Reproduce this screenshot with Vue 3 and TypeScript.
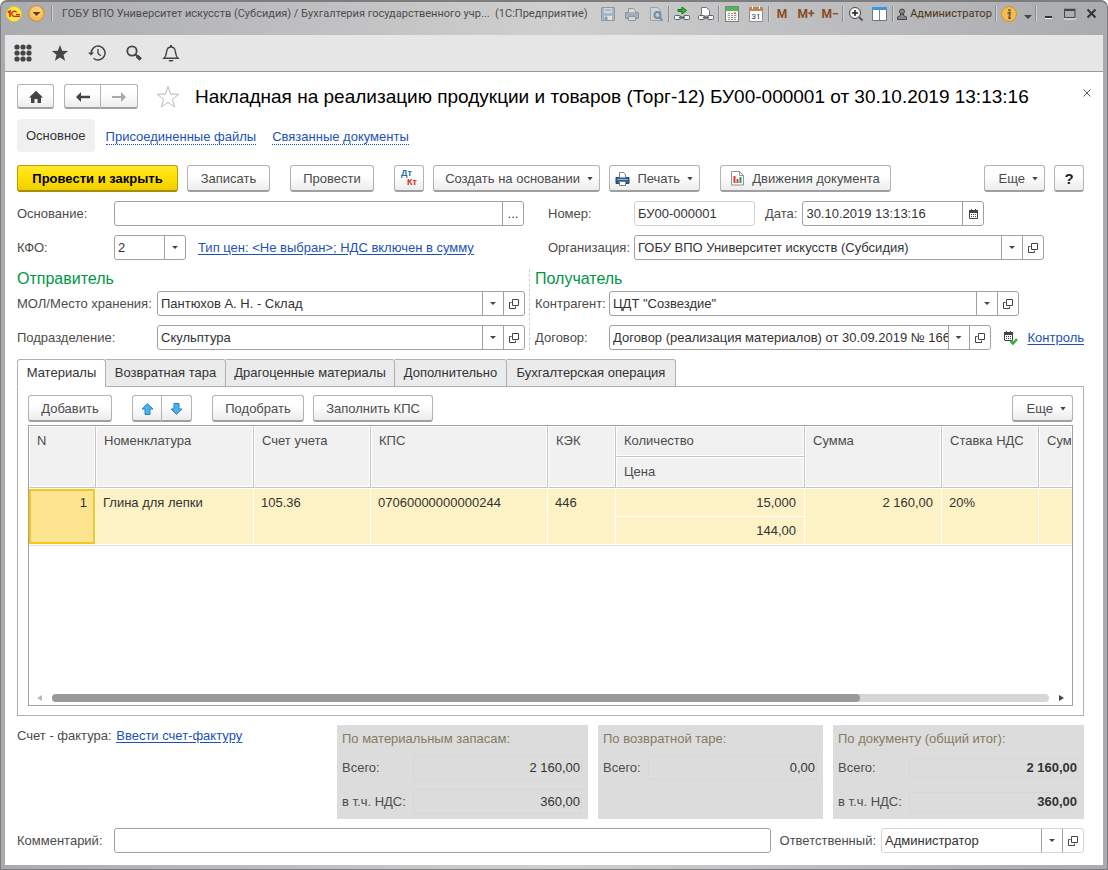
<script setup lang="ts">
import { ref } from 'vue'

interface Column {
  title: string
  cls: string
}

const formTabs = ['Материалы', 'Возвратная тара', 'Драгоценные материалы', 'Дополнительно', 'Бухгалтерская операция']
const activeTab = ref(0)

const leadColumns: Column[] = [
  { title: 'N', cls: 'c-n' },
  { title: 'Номенклатура', cls: 'c-item' },
  { title: 'Счет учета', cls: 'c-account' },
  { title: 'КПС', cls: 'c-kps' },
  { title: 'КЭК', cls: 'c-kek' },
]
const tailColumns: Column[] = [
  { title: 'Сумма', cls: 'c-sum' },
  { title: 'Ставка НДС', cls: 'c-rate' },
  { title: 'Сум', cls: 'c-rest' },
]

const basis = ref('')
const kfo = ref('2')
const docNumber = ref('БУ00-000001')
const docDate = ref('30.10.2019 13:13:16')
const organization = ref('ГОБУ ВПО Университет искусств (Субсидия)')
const storage = ref('Пантюхов А. Н. - Склад')
const department = ref('Скульптура')
const contractor = ref('ЦДТ "Созвездие"')
const contract = ref('Договор (реализация материалов) от 30.09.2019 № 166')
const comment = ref('')
const responsible = ref('Администратор')
</script>

<template>
  <div class="window">
    <header class="titlebar">
      <svg class="logo" width="16" height="16" viewBox="0 0 16 16" aria-hidden="true">
        <circle cx="8" cy="8" r="7.5" fill="#ffe84a" stroke="#e9c61c" />
        <path d="M1.800 6.500L4 5v6" fill="none" stroke="#d8231d" stroke-width="1.600" />
        <path d="M10.500 6.300A2.600 2.600 0 1 0 8.400 10.400H14M10 8.600H14" fill="none" stroke="#d8231d" stroke-width="1.300" />
      </svg>
      <button class="round" type="button" aria-label="Меню">
        <svg width="17" height="17" viewBox="0 0 17 17"><circle cx="8.500" cy="8.500" r="7.800" fill="#f8bb58" stroke="#c48a33" /><circle cx="8.500" cy="6.500" r="5.500" fill="#ffd58a" opacity=".6" /><path d="M4.500 7h8l-4 4z" fill="#6b3a10" /></svg>
      </button>
      <i class="sep"></i>
      <span class="caption">ГОБУ ВПО Университет искусств (Субсидия) / Бухгалтерия государственного учр...&nbsp; (1С:Предприятие)</span>
      <div class="sys">
        <button type="button" aria-label="Сохранить"><svg width="16" height="16" viewBox="0 0 16 16"><path d="M1.500 1.500h13v13h-13z" fill="#a9b6bf" stroke="#8b9aa5" /><path d="M4 2h8v5H4z" fill="#d3d8db" /><path d="M4 10h8v4H4z" fill="#dfe3e5" /><path d="M5 4h6M5 11h2v3H5z" stroke="#8b9aa5" fill="#8b9aa5" /></svg></button>
        <button type="button" aria-label="Печать"><svg width="16" height="16" viewBox="0 0 16 16"><path d="M1.500 6.500h13v6h-13z" fill="#a3afb8" stroke="#8b97a0" /><path d="M4.500 6.500v-4h5l2 2v2M4.500 10.500h7v4h-7z" fill="#d3d8db" stroke="#8b97a0" /></svg></button>
        <button type="button" aria-label="Предварительный просмотр"><svg width="16" height="16" viewBox="0 0 16 16"><path d="M2.500 1.500h7l3 3v10h-10z" fill="#ccd2d6" stroke="#98a4ad" /><circle cx="9.500" cy="9" r="3" fill="#c5ced4" stroke="#778b99" stroke-width="2" /><path d="M11.500 11.500l3 3" stroke="#778b99" stroke-width="2" /></svg></button>
        <i class="sep"></i>
        <button type="button" aria-label="Получить ссылку"><svg width="18" height="16" viewBox="0 0 18 16"><g fill="#f2f4f6" stroke="#59636d"><rect x="1.500" y="9.500" width="6" height="4" rx="1" /><rect x="10.500" y="9.500" width="6" height="4" rx="1" /></g><path d="M6 11.500h6" stroke="#59636d" stroke-width="2" /><path d="M5 3.500h4V1l4.500 3.500L9 8V5.500H5z" fill="#22c322" stroke="#16701a" /></svg></button>
        <button type="button" aria-label="Перейти по ссылке"><svg width="18" height="16" viewBox="0 0 18 16"><path d="M4.500 9V1.500h5l3 3V9" fill="#fff" stroke="#6d7780" /><g fill="#f2f4f6" stroke="#59636d"><rect x="1.500" y="9.500" width="6" height="4" rx="1" /><rect x="10.500" y="9.500" width="6" height="4" rx="1" /></g><path d="M6 11.500h6" stroke="#59636d" stroke-width="2" /></svg></button>
        <i class="sep"></i>
        <button type="button" aria-label="Калькулятор"><svg width="14" height="16" viewBox="0 0 14 16"><path d="M.5.500h13v15H.5z" fill="#f5f3ef" stroke="#7d7d72" /><path d="M1 1h12v4H1z" fill="#4cbb5c" /><path d="M3 7.500h8M3 9.500h8M3 11.500h8M3 13.500h8" stroke="#999" stroke-dasharray="2 1" /><path d="M9 6.500h2v1.500H9z" fill="#e0503f" /></svg></button>
        <button type="button" aria-label="Календарь"><svg width="14" height="16" viewBox="0 0 14 16"><path d="M.5 1.500h13v14H.5z" fill="#fbfcfd" stroke="#8d8f94" /><path d="M0 1h14v4H0z" fill="#c08254" /><path d="M3.500 0v3M10.500 0v3" stroke="#fff" /><text x="7" y="13" text-anchor="middle" font-size="8" fill="#333">31</text></svg></button>
        <i class="sep"></i>
        <button class="mem" type="button">M</button>
        <button class="mem" type="button">M+</button>
        <button class="mem" type="button">M−</button>
        <i class="sep"></i>
        <button type="button" aria-label="Масштаб"><svg width="16" height="16" viewBox="0 0 16 16"><circle cx="7" cy="7" r="5.500" fill="#f4f4f4" stroke="#444" /><path d="M7 4v6M4 7h6" stroke="#222" stroke-width="1.500" /><path d="M11 11l3.500 3.500" stroke="#555" stroke-width="2" /></svg></button>
        <button type="button" aria-label="Панели"><svg width="16" height="16" viewBox="0 0 16 16"><path d="M.5 1.500h14v13H.5z" fill="#fff" stroke="#657684" /><path d="M0 1h15v3H0z" fill="#3d94e0" /><path d="M7.500 4v10" stroke="#7b8893" /></svg></button>
        <i class="sep"></i>
        <button class="user" type="button"><svg width="10" height="12" viewBox="0 0 10 12"><circle cx="5" cy="3.500" r="2.500" fill="#888" stroke="#444" /><path d="M3.500 6h3v1.500l3 1.500v2.500h-9V9l3-1.500z" fill="#888" stroke="#444" /></svg><span>Администратор</span></button>
        <i class="sep"></i>
        <button class="info" type="button" aria-label="О программе"><svg width="16" height="16" viewBox="0 0 16 16"><circle cx="8" cy="8" r="7.500" fill="#f6bd4d" stroke="#d3922b" /><circle cx="8.500" cy="4.200" r="1.300" fill="#6e5f50" /><path d="M6.500 7h2.500L8 12h2" fill="none" stroke="#6e5f50" stroke-width="1.800" /></svg></button>
        <button class="narrow" type="button" aria-label="Список"><svg width="8" height="5" viewBox="0 0 8 5"><path d="M0 0h8L4 4z" fill="#444" /></svg></button>
        <i class="sep"></i>
        <button type="button" aria-label="Свернуть"><svg width="12" height="12" viewBox="0 0 12 12"><path d="M3 9h7" stroke="#333" stroke-width="2" /><path d="M3 10.500h7" stroke="#eee" /></svg></button>
        <button type="button" aria-label="Развернуть"><svg width="12" height="12" viewBox="0 0 12 12"><path d="M.5 2.500h10.500v7H.5z" fill="none" stroke="#444" /><path d="M0 1.500h11.500" stroke="#444" stroke-width="1.500" /><path d="M0 11h12" stroke="#eee" /></svg></button>
        <button type="button" aria-label="Закрыть окно"><svg width="12" height="12" viewBox="0 0 12 12"><path d="M1.500 1.500l8 8M9.500 1.500l-8 8" stroke="#333" stroke-width="2" /></svg></button>
      </div>
    </header>

    <nav class="tools" aria-label="Инструменты">
      <button type="button" aria-label="Функции"><svg width="18" height="18" viewBox="0 0 18 18" fill="#444"><template v-for="r in 3" :key="r"><circle v-for="c in 3" :key="c" :cx="c * 6 - 3" :cy="r * 6 - 3" r="2.600" /></template></svg></button>
      <button type="button" aria-label="Избранное"><svg width="18" height="18" viewBox="0 0 18 18"><path d="M9 1l2.200 5.700 5.900.3-4.600 3.700 1.600 6L9 13.400l-5.100 3.300 1.600-6L.9 7l5.900-.3z" fill="#444" /></svg></button>
      <button type="button" aria-label="История"><svg width="18" height="18" viewBox="0 0 18 18" fill="none" stroke="#444" stroke-width="1.500"><path d="M3.200 9a6.900 6.900 0 1 1 2.400 5.200" /><path d="M10 5v4.500l2.800 2.200" stroke-width="1.300" /><path d="M0 8.500h6L3 11.500z" fill="#444" stroke="none" /></svg></button>
      <button type="button" aria-label="Поиск"><svg width="18" height="18" viewBox="0 0 18 18" fill="none" stroke="#444"><circle cx="7" cy="7" r="4.700" stroke-width="1.800" /><path d="M10.500 10.500l2 2" stroke-width="1.800" /><path d="M12 12l3.700 3.500" stroke-width="3.400" /></svg></button>
      <button type="button" aria-label="Оповещения"><svg width="18" height="18" viewBox="0 0 18 18"><path d="M2 14.200c2.500-2 2.200-5 2.800-7.500C5.300 4.300 6.800 3 9 3s3.700 1.300 4.200 3.700c.6 2.500.3 5.500 2.800 7.500z" fill="none" stroke="#444" stroke-width="1.400" /><path d="M9 1v2" stroke="#444" stroke-width="2" /><path d="M6.500 16h5l-1 1.500h-3z" fill="#444" /></svg></button>
    </nav>

    <main class="page">
      <div class="heading">
        <button class="btn low home" type="button" aria-label="Домой"><svg width="16" height="14" viewBox="0 0 16 14"><path d="M8 .8L15 7.500h-2V13H9.500V9h-3v4H3V7.500H1z" fill="#444" /></svg></button>
        <div class="pair">
          <button class="btn low" type="button" aria-label="Назад"><svg width="14" height="10" viewBox="0 0 14 10"><path d="M5 0v3.700h9v2.600H5V10L0 5z" fill="#444" /></svg></button>
          <button class="btn low" type="button" aria-label="Вперед"><svg width="14" height="10" viewBox="0 0 14 10"><path d="M9 0v4H0v2h9v4l5-5z" fill="#aaa" /></svg></button>
        </div>
        <button class="plain fav" type="button" aria-label="В избранное"><svg width="24" height="24" viewBox="0 0 24 24"><path d="M12 1.500l2.700 7.600 8.100.2-6.400 5 2.300 7.700L12 17.400 5.300 22l2.300-7.700-6.400-5 8.100-.2z" fill="#fff" stroke="#b4bac2" /></svg></button>
        <h1>Накладная на реализацию продукции и товаров (Торг-12) БУ00-000001 от 30.10.2019 13:13:16</h1>
        <button class="plain close" type="button" aria-label="Закрыть"><svg width="8" height="8" viewBox="0 0 8 8"><path d="M.5.500l7 7M7.500.500l-7 7" stroke="#555" /></svg></button>
      </div>

      <nav class="links" aria-label="Разделы документа">
        <a class="current" href="#main">Основное</a>
        <a href="#files">Присоединенные файлы</a>
        <a href="#related">Связанные документы</a>
      </nav>

      <div class="commands">
        <button class="btn primary w-161" type="button">Провести и закрыть</button>
        <button class="btn w-83" type="button">Записать</button>
        <button class="btn w-84 apart" type="button">Провести</button>
        <button class="btn w-30 apart dtkt" type="button"><span class="dt">Дт</span><span class="kt">Кт</span></button>
        <button class="btn w-167 menu" type="button">Создать на основании<i class="caret"></i></button>
        <button class="btn w-91 menu" type="button"><svg width="15" height="14" viewBox="0 0 15 14"><path d="M1 5.500h13v6H1z" fill="#2f5f8c" stroke="#27496b" /><path d="M4.500 5.500v-5h4l2 2v3" fill="#fff" stroke="#6d8296" /><path d="M4.500 9.500h6v4h-6z" fill="#fff" stroke="#6d8296" /><path d="M2 7.500h11" stroke="#8db3d2" /></svg>Печать<i class="caret"></i></button>
        <button class="btn w-171 apart moves" type="button"><svg width="13" height="15" viewBox="0 0 13 15"><path d="M.5.500h8l4 4v9.500H.5z" fill="#fff" stroke="#8494a3" /><path d="M8.500.500v4h4" fill="none" stroke="#8494a3" /><path d="M3.500 5v7" stroke="#d33" stroke-width="2" /><path d="M6.500 8v4" stroke="#d33" stroke-width="2" /><path d="M9.500 6v6" stroke="#2a9a3c" stroke-width="2" /></svg>Движения документа</button>
        <span class="grow"></span>
        <button class="btn w-61 menu" type="button">Еще<i class="caret"></i></button>
        <button class="btn w-30 help" type="button">?</button>
      </div>

      <div class="upper">
        <div class="row">
          <label class="l-97" for="basis">Основание:</label>
          <div class="field grow"><input id="basis" v-model="basis" type="text"><button type="button" aria-label="Выбрать">...</button></div>
        </div>
        <div class="row">
          <label class="l-86" for="number">Номер:</label>
          <div class="field pale number"><input id="number" v-model="docNumber" type="text"></div>
          <label class="date-label" for="date">Дата:</label>
          <div class="field date"><input id="date" v-model="docDate" type="text"><button type="button" aria-label="Календарь"><svg width="9" height="10" viewBox="0 0 9 10"><path d="M.5 1.500h8v8h-8z" fill="#fff" stroke="#444" /><path d="M0 1h9v3H0zM2 0h1v2H2zM6 0h1v2H6z" fill="#444" /><path d="M2 5.500h5M2 7.500h5" stroke="#444" stroke-dasharray="1 1" /></svg></button></div>
        </div>
        <div class="row">
          <label class="l-97" for="kfo">КФО:</label>
          <div class="field kfo"><select id="kfo" v-model="kfo"><option>2</option></select><button type="button" aria-label="Список КФО"><i class="caret"></i></button></div>
          <a class="link price" href="#price">Тип цен: &lt;Не выбран&gt;; НДС включен в сумму</a>
        </div>
        <div class="row">
          <label class="l-86" for="org">Организация:</label>
          <div class="field grow"><input id="org" v-model="organization" type="text"><button type="button" aria-label="Список"><i class="caret"></i></button><button type="button" aria-label="Открыть"><svg class="open" width="10" height="10" viewBox="0 0 10 10"><path d="M3.500.500h6v6h-6zM2.500 3.500h-2v6h6v-2" /></svg></button></div>
        </div>
      </div>

      <div class="parties">
        <section class="party">
          <h2>Отправитель</h2>
          <div class="row">
            <label class="l-140" for="storage">МОЛ/Место хранения:</label>
            <div class="field grow"><input id="storage" v-model="storage" type="text"><button type="button" aria-label="Список"><i class="caret"></i></button><button type="button" aria-label="Открыть"><svg class="open" width="10" height="10" viewBox="0 0 10 10"><path d="M3.500.500h6v6h-6zM2.500 3.500h-2v6h6v-2" /></svg></button></div>
          </div>
          <div class="row">
            <label class="l-140" for="department">Подразделение:</label>
            <div class="field grow"><input id="department" v-model="department" type="text"><button type="button" aria-label="Список"><i class="caret"></i></button><button type="button" aria-label="Открыть"><svg class="open" width="10" height="10" viewBox="0 0 10 10"><path d="M3.500.500h6v6h-6zM2.500 3.500h-2v6h6v-2" /></svg></button></div>
          </div>
        </section>
        <section class="party receiver">
          <h2>Получатель</h2>
          <div class="row contractor">
            <label class="l-74" for="contractor">Контрагент:</label>
            <div class="field grow"><input id="contractor" v-model="contractor" type="text"><button type="button" aria-label="Список"><i class="caret"></i></button><button type="button" aria-label="Открыть"><svg class="open" width="10" height="10" viewBox="0 0 10 10"><path d="M3.500.500h6v6h-6zM2.500 3.500h-2v6h6v-2" /></svg></button></div>
          </div>
          <div class="row">
            <label class="l-74" for="contract">Договор:</label>
            <div class="field grow"><input id="contract" v-model="contract" type="text"><button type="button" aria-label="Список"><i class="caret"></i></button><button type="button" aria-label="Открыть"><svg class="open" width="10" height="10" viewBox="0 0 10 10"><path d="M3.500.500h6v6h-6zM2.500 3.500h-2v6h6v-2" /></svg></button></div>
            <svg class="check" width="14" height="14" viewBox="0 0 14 14" aria-hidden="true"><path d="M.5 1.500h8v8h-8z" fill="#fff" stroke="#444" /><path d="M0 1h9v3H0zM2 0h1v2H2zM6 0h1v2H6z" fill="#444" /><path d="M2 5.500h5M2 7.500h5" stroke="#444" stroke-dasharray="1 1" /><path d="M6.500 10l2.500 2.500 4-4.500" fill="none" stroke="#2fae35" stroke-width="2.500" /></svg>
            <a class="link" href="#control">Контроль</a>
          </div>
        </section>
      </div>

      <div class="tabs" role="tablist">
        <button v-for="(tab, i) in formTabs" :key="tab" type="button" role="tab" :aria-selected="i === activeTab" :class="{ on: i === activeTab }" @click="activeTab = i">{{ tab }}</button>
      </div>

      <section class="panel">
        <div class="panel-bar">
          <button class="btn w-84" type="button">Добавить</button>
          <div class="pair small apart">
            <button class="btn" type="button" aria-label="Вверх"><svg width="13" height="12" viewBox="0 0 13 12"><path d="M6.500.700L12 6H9v5.500H4V6H1z" fill="#46b3f1" stroke="#2682bb" /></svg></button>
            <button class="btn" type="button" aria-label="Вниз"><svg width="13" height="12" viewBox="0 0 13 12"><path d="M6.500 11.300L12 6H9V.500H4V6H1z" fill="#46b3f1" stroke="#2682bb" /></svg></button>
          </div>
          <button class="btn w-92 apart" type="button">Подобрать</button>
          <button class="btn w-120" type="button">Заполнить КПС</button>
          <span class="grow"></span>
          <button class="btn w-61 menu" type="button">Еще<i class="caret"></i></button>
        </div>

        <div class="sheet">
          <table>
            <colgroup>
              <col v-for="c in leadColumns" :key="c.cls" :class="c.cls">
              <col class="c-qty">
              <col v-for="c in tailColumns" :key="c.cls" :class="c.cls">
            </colgroup>
            <thead>
              <tr>
                <th v-for="c in leadColumns" :key="c.cls" rowspan="2">{{ c.title }}</th>
                <th>Количество</th>
                <th v-for="c in tailColumns" :key="c.cls" rowspan="2">{{ c.title }}</th>
              </tr>
              <tr><th>Цена</th></tr>
            </thead>
            <tbody>
              <tr>
                <td class="num picked" rowspan="2">1</td>
                <td rowspan="2">Глина для лепки</td>
                <td rowspan="2">105.36</td>
                <td rowspan="2">07060000000000244</td>
                <td rowspan="2">446</td>
                <td class="num">15,000</td>
                <td class="num" rowspan="2">2 160,00</td>
                <td rowspan="2">20%</td>
                <td rowspan="2"></td>
              </tr>
              <tr><td class="num">144,00</td></tr>
            </tbody>
          </table>
          <div class="scroll">
            <svg width="5" height="6" viewBox="0 0 5 6"><path d="M5 0v6L0 3z" fill="#bbb" /></svg>
            <div class="track"><div class="thumb"></div></div>
            <svg width="5" height="6" viewBox="0 0 5 6"><path d="M0 0v6l5-3z" fill="#444" /></svg>
          </div>
        </div>
      </section>

      <div class="totals">
        <div class="invoice">Счет - фактура: <a class="link" href="#invoice">Ввести счет-фактуру</a></div>
        <fieldset class="total">
          <legend>По материальным запасам:</legend>
          <div class="trow"><label for="m-sum">Всего:</label><input id="m-sum" value="2 160,00" readonly></div>
          <div class="trow"><label for="m-vat">в т.ч. НДС:</label><input id="m-vat" value="360,00" readonly></div>
        </fieldset>
        <fieldset class="total tare">
          <legend>По возвратной таре:</legend>
          <div class="trow"><label for="t-sum">Всего:</label><input id="t-sum" value="0,00" readonly></div>
        </fieldset>
        <fieldset class="total strong">
          <legend>По документу (общий итог):</legend>
          <div class="trow"><label for="d-sum">Всего:</label><input id="d-sum" value="2 160,00" readonly></div>
          <div class="trow"><label for="d-vat">в т.ч. НДС:</label><input id="d-vat" value="360,00" readonly></div>
        </fieldset>
      </div>

      <div class="row footer">
        <label class="l-97" for="comment">Комментарий:</label>
        <div class="field grow"><input id="comment" v-model="comment" type="text"></div>
        <label class="resp-label" for="responsible">Ответственный:</label>
        <div class="field pale resp"><input id="responsible" v-model="responsible" type="text"><button type="button" aria-label="Список"><i class="caret"></i></button><button type="button" aria-label="Открыть"><svg class="open" width="10" height="10" viewBox="0 0 10 10"><path d="M3.500.500h6v6h-6zM2.500 3.500h-2v6h6v-2" /></svg></button></div>
      </div>
    </main>
  </div>
</template>

<style>
body {
  margin: 0;
  background: #fff;
}
</style>

<style scoped>
* {
  box-sizing: border-box;
}
.window {
  display: flex;
  flex-direction: column;
  min-height: 100vh;
  padding: 0 4px 4px;
  border: 1px solid #7d7d7f;
  border-top-width: 2px;
  border-radius: 7px 7px 0 0;
  background: linear-gradient(90deg, #aaabaf, #cfcfcf 50%, #aaabaf);
  color: #4c4c4c;
  font: 13px/16px "Liberation Sans", Arial, sans-serif;
}
button,
input,
select {
  margin: 0;
  padding: 0;
  border: 0;
  background: none;
  color: inherit;
  font: inherit;
}
svg {
  display: block;
  flex: none;
}
.grow {
  flex: 1;
}

/* Title bar */
.titlebar {
  display: flex;
  align-items: center;
  height: 33px;
  padding: 0 0 10px 1px;
  font: 11px/16px Roboto, "Liberation Sans", sans-serif;
}
.round {
  margin: 0 6px;
}
.sep {
  width: 1px;
  height: 16px;
  margin-right: 1px;
  background: #8b8c8f;
  box-shadow: 1px 0 #d0d0d0;
}
.caption {
  flex: 1;
  min-width: 0;
  margin-left: 9px;
  overflow: hidden;
  white-space: nowrap;
}
.sys {
  display: flex;
  align-items: center;
}
.sys button {
  display: flex;
  align-items: center;
  justify-content: center;
  width: 24px;
  height: 18px;
}
.sys .mem {
  color: #8a4b20;
  font-size: 12px;
  font-weight: 700;
}
.sys .user {
  gap: 3px;
  width: 101px;
  color: #4b3413;
}
.sys .narrow {
  width: 14px;
  padding-top: 8px;
}
.sys button:nth-last-child(-n + 3) {
  width: 22px;
}

/* Tools */
.tools {
  display: flex;
  align-items: center;
  gap: 19px;
  height: 37px;
  padding-left: 9px;
  border-bottom: 1px solid #9a9a9a;
  background: #e6e6e6;
}

/* Page */
.page {
  display: flex;
  flex: 1;
  flex-direction: column;
  padding: 12px 19px 12px 12px;
  background: #fff;
}
.heading {
  display: flex;
  align-items: center;
  height: 25px;
}
h1 {
  flex: 1;
  min-width: 0;
  margin: 0 0 0 15px;
  color: #000;
  font-size: 19px;
  font-weight: 400;
  line-height: 25px;
  white-space: nowrap;
}
.fav {
  margin-left: 18px;
}
.close {
  align-self: flex-start;
  width: 8px;
  height: 18px;
  margin-right: -7px;
}
.btn {
  display: flex;
  align-items: center;
  justify-content: center;
  height: 27px;
  padding-top: 1px;
  border: 1px solid #b3b3b3;
  border-bottom: 2px solid #a0a0a0;
  border-radius: 3px;
  background: linear-gradient(#fff 40%, #ececec);
  white-space: nowrap;
}
.btn.low {
  width: 37px;
  height: 25px;
}
.pair {
  display: flex;
}
.heading .pair {
  margin-left: 10px;
}
.pair .btn:first-child {
  border-radius: 3px 0 0 3px;
}
.pair .btn:last-child {
  border-left: 0;
  border-radius: 0 3px 3px 0;
}
.pair.small .btn {
  width: 30px;
}

.links {
  display: flex;
  gap: 16px;
  align-items: center;
  height: 33px;
  margin: 10px 0 13px;
}
.links a {
  margin-top: 3px;
  border-bottom: 1px dotted #1b52b5;
  color: #1b52b5;
  line-height: 14px;
  text-decoration: none;
}
.links .current {
  margin: 0 -5px 0 0;
  padding: 0 9px;
  border: 0;
  border-radius: 4px;
  background: #f0f0f0;
  color: #333;
  line-height: 33px;
}

.commands,
.panel-bar {
  display: flex;
  gap: 9px;
}
.apart {
  margin-left: 11px;
}
.primary {
  border-color: #bd9d00;
  border-bottom-color: #a88c00;
  background: linear-gradient(#ffe92e, #ffdf00 50%, #efce00);
  color: #000;
  font-weight: 700;
}
.w-30 { width: 30px; }
.w-61 { width: 61px; }
.w-83 { width: 83px; }
.w-84 { width: 84px; }
.w-91 { width: 91px; }
.w-92 { width: 92px; }
.w-120 { width: 120px; }
.w-161 { width: 161px; }
.w-167 { width: 167px; }
.w-171 { width: 171px; }
.btn.menu {
  justify-content: flex-end;
  gap: 7px;
  padding-right: 6px;
}
.btn.moves {
  gap: 8px;
}
.help {
  color: #222;
  font-size: 15px;
  font-weight: 700;
}
.dtkt {
  flex-direction: column;
  align-items: stretch;
  padding: 0 6px;
  font-size: 9px;
  font-weight: 700;
  line-height: 9px;
}
.dt {
  color: #2c6da3;
  text-align: left;
}
.kt {
  color: #d42a12;
  text-align: right;
}
.caret {
  width: 6px;
  height: 3px;
  background: #444;
  clip-path: polygon(0 0, 100% 0, 50% 100%);
}
.menu .caret {
  height: 4px;
}

/* Fields */
.upper {
  display: grid;
  grid-template-columns: 507fr 496fr;
  gap: 9px 24px;
  margin-top: 9px;
  padding-right: 40px;
}
.row {
  display: flex;
  align-items: center;
  height: 25px;
  white-space: nowrap;
}
.l-74 { width: 74px; }
.l-86 { width: 86px; }
.l-97 { width: 97px; }
.l-140 { width: 140px; }
.field {
  display: flex;
  height: 25px;
  min-width: 0;
  border: 1px solid #a0a0a0;
  border-radius: 3px;
  background: #fff;
  color: #333;
}
.field input,
.field select {
  flex: 1;
  width: 0;
  min-width: 0;
  padding: 0 0 0 3px;
  outline: 0;
  appearance: none;
}
.field button {
  display: flex;
  align-items: center;
  justify-content: center;
  width: 21px;
  border-left: 1px solid #a0a0a0;
}
.field.pale {
  border-color: #d4d4d4;
}
.number {
  width: 121px;
}
.date-label {
  margin: 0 5px 0 10px;
}
.date {
  width: 182px;
}
.kfo {
  width: 72px;
}
.price {
  margin-left: 12px;
}
.link {
  color: #1b52b5;
  text-underline-offset: 2px;
}
.open {
  fill: none;
  stroke: #444;
}
.parties {
  display: grid;
  grid-template-columns: 508fr 555fr;
  gap: 4px;
  margin: 9px 0;
}
.party {
  display: flex;
  flex-direction: column;
  gap: 9px;
  min-width: 0;
}
.receiver {
  padding-left: 5px;
  border-left: 1px dashed #d0d0d0;
}
h2 {
  height: 22px;
  margin: 0 0 -9px;
  color: #009646;
  font-size: 16px;
  font-weight: 400;
  line-height: 20px;
}
.contractor {
  padding-right: 65px;
}
.check {
  margin: 0 10px 0 13px;
}

/* Tabs and table */
.tabs {
  z-index: 1;
  display: grid;
  grid-template-columns: 89px 120px 169px 112px 169px;
  height: 28px;
}
.tabs button {
  height: 28px;
  border: 1px solid #b0b0b0;
  border-left-width: 0;
  border-radius: 0 3px 0 0;
  background: #ebebeb;
  color: #333;
  white-space: nowrap;
}
.tabs button:first-child {
  border-left-width: 1px;
  border-radius: 3px 3px 0 0;
}
.tabs .on {
  border-bottom-color: #fff;
  background: #fff;
}
.panel {
  display: flex;
  flex: 1;
  flex-direction: column;
  gap: 3px;
  margin-top: -1px;
  padding: 8px 10px 9px;
  border: 1px solid #b0b0b0;
}
.sheet {
  display: flex;
  flex: 1;
  flex-direction: column;
  justify-content: space-between;
  overflow: hidden;
  border: 1px solid #a0a0a0;
}
table {
  width: 100%;
  border-spacing: 0;
  table-layout: fixed;
}
.c-n { width: 67px; }
.c-item { width: 158px; }
.c-account { width: 117px; }
.c-kps { width: 177px; }
.c-kek { width: 68px; }
.c-qty { width: 189px; }
.c-sum { width: 137px; }
.c-rate { width: 97px; }
th,
td {
  overflow: hidden;
  vertical-align: top;
  white-space: nowrap;
}
th {
  height: 31px;
  padding: 6px 0 0 7px;
  border: 1px solid #fff;
  border-right-color: #c4c4c4;
  border-bottom-color: #c4c4c4;
  background: #f1f1f1;
  color: #4c4c4c;
  font-weight: 400;
  text-align: left;
  box-shadow: inset -1px -1px #fff;
}
td {
  height: 28px;
  padding: 6px 8px 0 7px;
  border: 1px solid #fff;
  border-width: 1px 1px 0 0;
  background: #fdf1c6;
  color: #333;
}
th:last-child[rowspan],
td:last-child[rowspan] {
  border-right: 0;
}
tbody {
  box-shadow: 0 1px #fff, 0 2px #e0e0e0;
}
.num {
  text-align: right;
}
.picked {
  background: #fde490;
  box-shadow: inset 0 0 0 2px #fbc61c;
}
.scroll {
  display: flex;
  align-items: center;
  gap: 10px;
  height: 8px;
  margin: 0 8px 3px;
}
.track {
  flex: 1;
  height: 8px;
  border-radius: 4px;
  background: #d6d6d6;
}
.thumb {
  width: 81%;
  height: 8px;
  border-radius: 4px;
  background: #999;
}

/* Totals */
.totals {
  display: flex;
  gap: 10px;
  height: 94px;
  margin: 9px 0;
}
.invoice {
  flex: 1;
  padding-top: 3px;
  white-space: nowrap;
}
.invoice .link {
  margin-left: 1px;
}
.total {
  width: 251px;
  margin: 0;
  padding: 0 6px 0 5px;
  border: 0;
  background: #dcdcdc;
}
.total legend {
  float: left;
  width: 100%;
  height: 30px;
  padding: 6px 0 0;
  color: #857a5e;
}
.trow {
  display: flex;
  clear: both;
  align-items: center;
  height: 25px;
  margin-bottom: 9px;
}
.trow label {
  width: 71px;
}
.trow input {
  flex: 1;
  width: 0;
  height: 25px;
  padding: 0 1px;
  border: 1px solid #d6d6d6;
  border-radius: 2px;
  color: #333;
  text-align: right;
}
.tare {
  width: 225px;
}
.tare label {
  width: 45px;
}
.strong input {
  height: 20px;
  padding: 0;
  font-weight: 700;
}
.resp-label {
  margin: 0 5px 0 9px;
}
.resp {
  width: 203px;
}
</style>
